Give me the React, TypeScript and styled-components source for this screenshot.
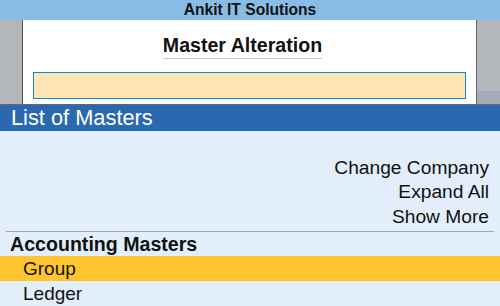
import React from "react";
import styled, { createGlobalStyle } from "styled-components";

const Global = createGlobalStyle`
  html, body { margin: 0; padding: 0; background: #e2effa; }
  body { font-family: "Liberation Sans", Arial, sans-serif; color: #111; }
  * { box-sizing: border-box; }
`;

const Page = styled.div`
  width: 500px;
  height: 306px;
  overflow: hidden;
  display: flex;
  flex-direction: column;
  background: #e2effa;
`;

const TopBar = styled.div`
  height: 20px;
  background: #8abde5;
  display: flex;
  align-items: center;
  justify-content: center;
  font-weight: bold;
  font-size: 15.6px;
  color: #111;
`;

const Header = styled.div`
  height: 85px;
  display: flex;
  border-bottom: 1px solid #666;
`;

const LeftGutter = styled.div`
  width: 23px;
  background: #b4b7ba;
  border-right: 1px solid #555;
`;

const RightGutter = styled.div`
  width: 24px;
  border-left: 1px solid #666;
  display: flex;
  flex-direction: column;
`;

const GutterTop = styled.div`
  flex: 1;
  background: #b4b8bc;
`;

const GutterBottom = styled.div`
  height: 13px;
  background: #a3acb6;
`;

const Panel = styled.div`
  flex: 1;
  background: #fff;
  display: flex;
  flex-direction: column;
  align-items: center;
  padding: 13px 10px 0 10px;
`;

const Title = styled.div`
  font-weight: bold;
  font-size: 19.6px;
  line-height: 24px;
  padding-bottom: 1px;
  border-bottom: 1px solid #c8c8c8;
  margin-right: 14px;
`;

const Input = styled.div`
  margin-top: 13px;
  align-self: stretch;
  height: 27px;
  background: #fde6b4;
  border: 1px solid #1187cb;
`;

const SectionBar = styled.div`
  height: 26px;
  background: #2a68b0;
  color: #fff;
  font-size: 21.8px;
  line-height: 26px;
  padding-left: 11px;
`;

const Links = styled.div`
  padding: 25px 11px 0 0;
  display: flex;
  flex-direction: column;
  align-items: flex-end;
`;

const LinkItem = styled.div`
  font-size: 19.2px;
  line-height: 24.5px;
  height: 24.5px;
`;

const Divider = styled.div`
  margin: 2px 6px 0 6px;
  height: 1px;
  background: #a0a4a8;
`;

const GroupHeading = styled.div`
  height: 24px;
  line-height: 24px;
  font-weight: bold;
  font-size: 19.6px;
  padding-left: 10px;
`;

const Row = styled.div<{ $active?: boolean }>`
  height: 25px;
  line-height: 25px;
  font-size: 19px;
  padding-left: 23px;
  background: ${(p) => (p.$active ? "#ffc52f" : "transparent")};
`;

export default function App() {
  return (
    <Page>
      <Global />
      <TopBar>Ankit IT Solutions</TopBar>
      <Header>
        <LeftGutter />
        <Panel>
          <Title>Master Alteration</Title>
          <Input />
        </Panel>
        <RightGutter>
          <GutterTop />
          <GutterBottom />
        </RightGutter>
      </Header>
      <SectionBar>List of Masters</SectionBar>
      <Links>
        <LinkItem>Change Company</LinkItem>
        <LinkItem>Expand All</LinkItem>
        <LinkItem>Show More</LinkItem>
      </Links>
      <Divider />
      <GroupHeading>Accounting Masters</GroupHeading>
      <Row $active>Group</Row>
      <Row>Ledger</Row>
    </Page>
  );
}
